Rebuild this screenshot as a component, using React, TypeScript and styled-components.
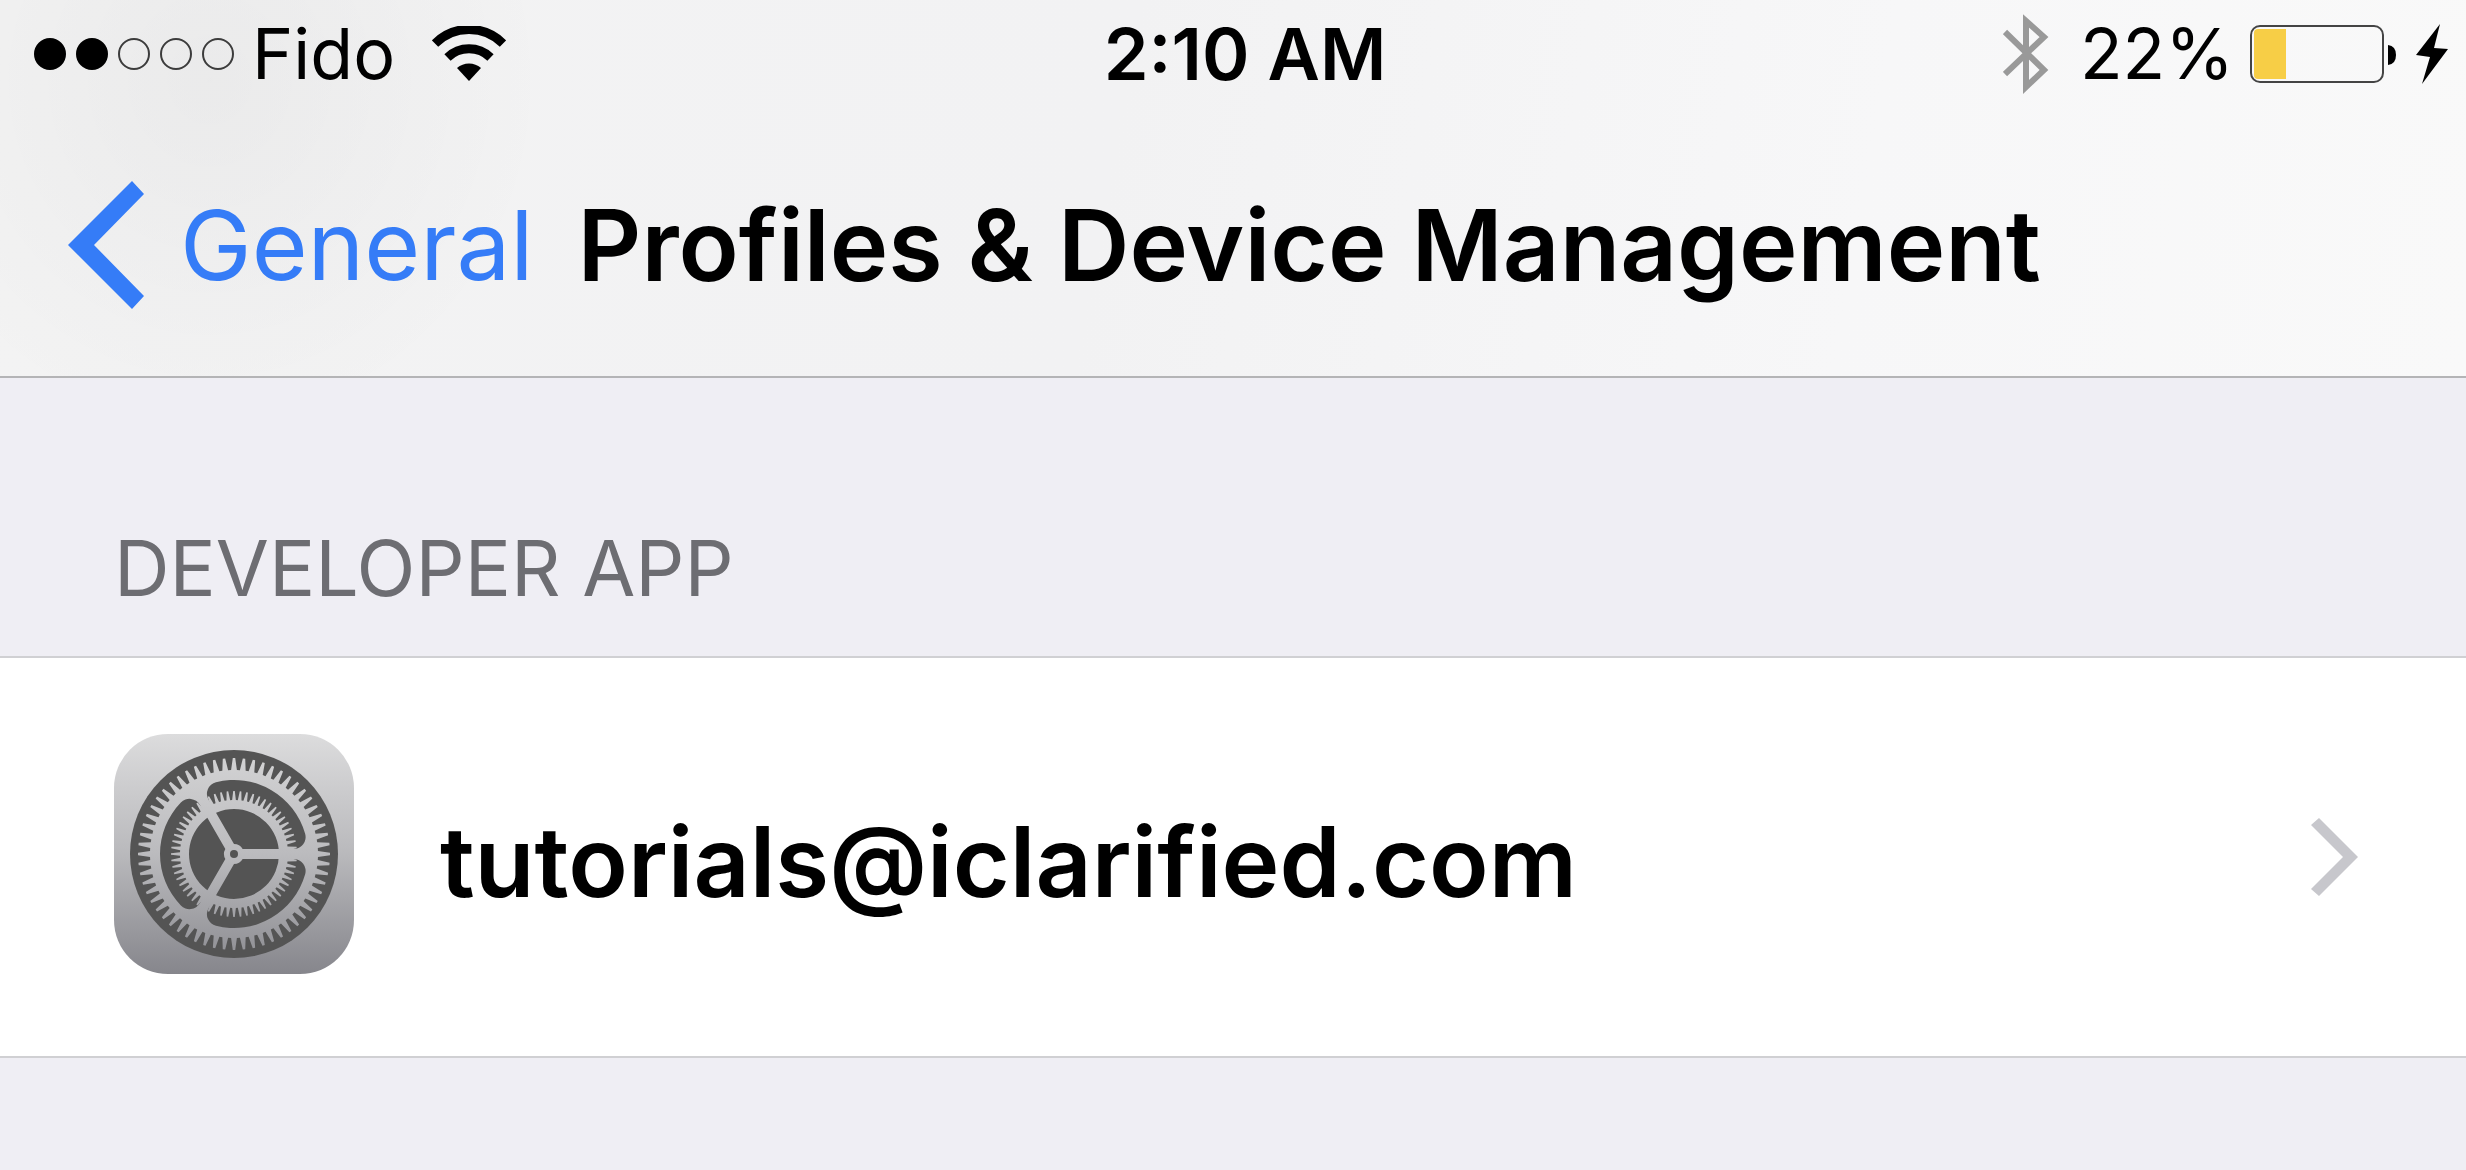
import React from "react";
import styled, { createGlobalStyle } from "styled-components";

const GlobalStyle = createGlobalStyle`
  *, *::before, *::after { box-sizing: border-box; }
  body {
    margin: 0;
    background: #efeef4;
    color: #000;
    font-family: Inter, "Liberation Sans", sans-serif;
  }
  svg { display: block; flex: none; }
`;

const Screen = styled.div`
  display: flex;
  flex-direction: column;
  min-height: 100vh;
  background: #efeef4;
`;

const Header = styled.header`
  border-bottom: 2px solid #b4b4b6;
  background:
    radial-gradient(ellipse 340px 360px at 210px 80px, rgba(0, 0, 10, 0.035), rgba(0, 0, 0, 0)),
    linear-gradient(100deg, #f3f3f3 0%, #f2f2f3 45%, #f7f7f8 75%, #f9f9f9 100%);
`;

const StatusBar = styled.div`
  display: grid;
  grid-template-columns: 1fr auto 1fr;
  align-items: center;
  height: 107px;
  padding: 0 18px 0 34px;
`;

const StatusGroup = styled.div<{ $end?: boolean }>`
  display: flex;
  align-items: center;
  justify-content: ${(p) => (p.$end ? "flex-end" : "flex-start")};
`;

const StatusText = styled.span`
  font-size: 70px;
  line-height: 84px;
  white-space: nowrap;
`;

const Clock = styled.time`
  padding-left: 8px;
  font-size: 72px;
  line-height: 84px;
  font-weight: 600;
  white-space: nowrap;
`;

const Carrier = styled(StatusText)`
  margin: 0 37px 0 18px;
`;

const BatteryLevel = styled(StatusText)`
  margin: 0 16px 0 31px;
`;

const BatteryCharge = styled.div`
  display: flex;
  align-items: center;
  gap: 20px;
`;

const SignalDots = styled.div`
  display: flex;
  gap: 10px;
`;

const Dot = styled.span<{ $on: boolean }>`
  width: 32px;
  height: 32px;
  border: 2px solid ${(p) => (p.$on ? "#000" : "#3c3c3c")};
  border-radius: 50%;
  background: ${(p) => (p.$on ? "#000" : "transparent")};
`;

const NavBar = styled.nav`
  display: flex;
  align-items: center;
  gap: 44px;
  height: 269px;
  padding: 6px 68px 0;
`;

const BackButton = styled.button`
  display: flex;
  align-items: center;
  gap: 36px;
  padding: 0;
  border: 0;
  background: none;
  color: #357cf7;
  font: inherit;
  font-size: 96px;
  line-height: 120px;
  cursor: pointer;
`;

const Title = styled.h1`
  margin: 0;
  font-size: 99px;
  line-height: 120px;
  font-weight: 600;
  white-space: nowrap;
`;

const SectionTitle = styled.h2`
  margin: 0;
  padding: 144px 114px 42px;
  color: #6d6d72;
  font-size: 77px;
  line-height: 92px;
  font-weight: 400;
`;

const List = styled.ul`
  margin: 0;
  padding: 0;
  list-style: none;
  background: #fff;
  border-top: 2px solid #d0d0d3;
  border-bottom: 2px solid #d0d0d3;
`;

const Row = styled.a`
  display: flex;
  align-items: center;
  padding: 76px 108px 76px 114px;
  color: inherit;
  text-decoration: none;
`;

const RowIcon = styled.span`
  padding-bottom: 6px;
`;

const RowLabel = styled.span`
  flex: 1;
  padding: 10px 0 0 86px;
  font-size: 98px;
  line-height: 120px;
  font-weight: 600;
`;

const polar = (r: number, a: number) =>
  `${(r * Math.cos(a)).toFixed(2)} ${(r * Math.sin(a)).toFixed(2)}`;

function gearOutline(teeth: number, base: number, tip: number) {
  const step = (Math.PI * 2) / teeth;
  const points: string[] = [];
  for (let i = 0; i < teeth; i++) {
    const a = i * step;
    points.push(
      polar(base, a - step * 0.33),
      polar(tip, a - step * 0.12),
      polar(tip, a + step * 0.12),
      polar(base, a + step * 0.33),
    );
  }
  return `M${points.join("L")}Z`;
}

// Opening between two spokes, from the spoke at 0° to the one at -120°.
function opening(radius: number, half: number, corner: number, fillet: number) {
  const inner = radius - corner;
  const cy = half + corner;
  const cx = Math.sqrt(inner * inner - cy * cy);
  const a = Math.atan2(cy, cx);
  const third = (Math.PI * 2) / 3;
  const hub = (half + fillet) / Math.tan(Math.PI / 3);
  const onLine = (x: number) => [Math.hypot(x, half), Math.atan2(half, x)] as const;
  const [r1, a1] = onLine(hub);
  const [r2, a2] = onLine(cx);
  return [
    `M${polar(r1, -a1)}`,
    `L${polar(r2, -a2)}`,
    `A${corner} ${corner} 0 0 0 ${polar(radius, -a)}`,
    `A${radius} ${radius} 0 0 0 ${polar(radius, -third + a)}`,
    `A${corner} ${corner} 0 0 0 ${polar(r2, -third + a2)}`,
    `L${polar(r1, -third + a1)}`,
    `A${fillet} ${fillet} 0 0 1 ${polar(r1, -a1)}Z`,
  ].join("");
}

const OUTER_GEAR = gearOutline(60, 84, 96);
const INNER_GEAR = gearOutline(60, 54, 63) + "M45 0A45 45 0 1 0 -45 0A45 45 0 1 0 45 0Z";
const OPENING = opening(74, 5, 12, 10);

function SettingsIcon() {
  return (
    <svg width="240" height="240" viewBox="-120 -120 240 240" aria-hidden="true">
      <defs>
        <linearGradient id="metal" gradientUnits="userSpaceOnUse" x1="0" y1="-120" x2="0" y2="120">
          <stop offset="0" stopColor="#dcdcdd" />
          <stop offset="0.5" stopColor="#b9b9bc" />
          <stop offset="1" stopColor="#86868c" />
        </linearGradient>
        <linearGradient id="gear" gradientUnits="userSpaceOnUse" x1="0" y1="-100" x2="0" y2="100">
          <stop offset="0" stopColor="#d3d3d4" />
          <stop offset="0.5" stopColor="#bbbbbe" />
          <stop offset="1" stopColor="#919196" />
        </linearGradient>
      </defs>
      <rect x="-120" y="-120" width="240" height="240" rx="54" fill="url(#metal)" />
      <circle r="104" fill="#545454" />
      <path d={OUTER_GEAR} fill="url(#gear)" />
      {[0, 120, 240].map((angle) => (
        <path key={angle} d={OPENING} fill="#545454" transform={`rotate(${angle})`} />
      ))}
      <path d={INNER_GEAR} fill="url(#gear)" fillRule="evenodd" />
      <circle r="4" fill="#545454" />
    </svg>
  );
}

function WifiIcon() {
  return (
    <svg width="74" height="56" viewBox="0 0 74 56" role="img" aria-label="Wi-Fi">
      <g fill="none" stroke="#000" strokeWidth="9">
        <path d="M3 17.500A48 48 0 0 1 71 17.500" />
        <path d="M15.500 31.500A31 31 0 0 1 58.500 31.500" />
      </g>
      <path d="M25 42A18 18 0 0 1 49 42L37 55Z" />
    </svg>
  );
}

function BluetoothIcon() {
  return (
    <svg width="46" height="84" viewBox="0 0 46 84" role="img" aria-label="Bluetooth">
      <path
        d="M2 20L41 58L23 75V9L41 25L2 62"
        fill="none"
        stroke="#999"
        strokeWidth="6"
        strokeMiterlimit="10"
      />
    </svg>
  );
}

function BatteryIcon() {
  return (
    <svg width="146" height="58" viewBox="0 0 146 58" aria-hidden="true">
      <rect x="1" y="1" width="132" height="56" rx="9" fill="none" stroke="#444" strokeWidth="2" />
      <path d="M8 4H36V54H8Q4 54 4 50V8Q4 4 8 4Z" fill="#f7ce46" />
      <path d="M138 20Q146 21 146 30T138 40Z" />
    </svg>
  );
}

function BoltIcon() {
  return (
    <svg width="32" height="60" viewBox="0 0 32 60" role="img" aria-label="Charging">
      <path d="M24 0L0 31L14 33L6 60L32 25L18 24Z" />
    </svg>
  );
}

function BackChevron() {
  return (
    <svg width="76" height="128" viewBox="0 0 76 128" aria-hidden="true">
      <path d="M64 0L76 13L26 64L76 115L64 128L0 64Z" fill="#357cf7" />
    </svg>
  );
}

function DisclosureChevron() {
  return (
    <svg width="47" height="78" viewBox="0 0 47 78" aria-hidden="true">
      <path d="M8 0L47 39L8 78L0 71L32 39L0 7Z" fill="#c7c7cc" />
    </svg>
  );
}

export default function App() {
  return (
    <Screen>
      <GlobalStyle />
      <Header>
        <StatusBar>
          <StatusGroup>
            <SignalDots role="img" aria-label="Signal strength">
              {[1, 2, 3, 4, 5].map((n) => (
                <Dot key={n} $on={n <= 2} />
              ))}
            </SignalDots>
            <Carrier>Fido</Carrier>
            <WifiIcon />
          </StatusGroup>
          <Clock>2:10 AM</Clock>
          <StatusGroup $end>
            <BluetoothIcon />
            <BatteryLevel>22%</BatteryLevel>
            <BatteryCharge>
              <BatteryIcon />
              <BoltIcon />
            </BatteryCharge>
          </StatusGroup>
        </StatusBar>
        <NavBar>
          <BackButton type="button">
            <BackChevron />
            General
          </BackButton>
          <Title>Profiles &amp; Device Management</Title>
        </NavBar>
      </Header>
      <main>
        <SectionTitle>DEVELOPER APP</SectionTitle>
        <List>
          <li>
            <Row href="#account">
              <RowIcon>
                <SettingsIcon />
              </RowIcon>
              <RowLabel>tutorials@iclarified.com</RowLabel>
              <DisclosureChevron />
            </Row>
          </li>
        </List>
      </main>
    </Screen>
  );
}
